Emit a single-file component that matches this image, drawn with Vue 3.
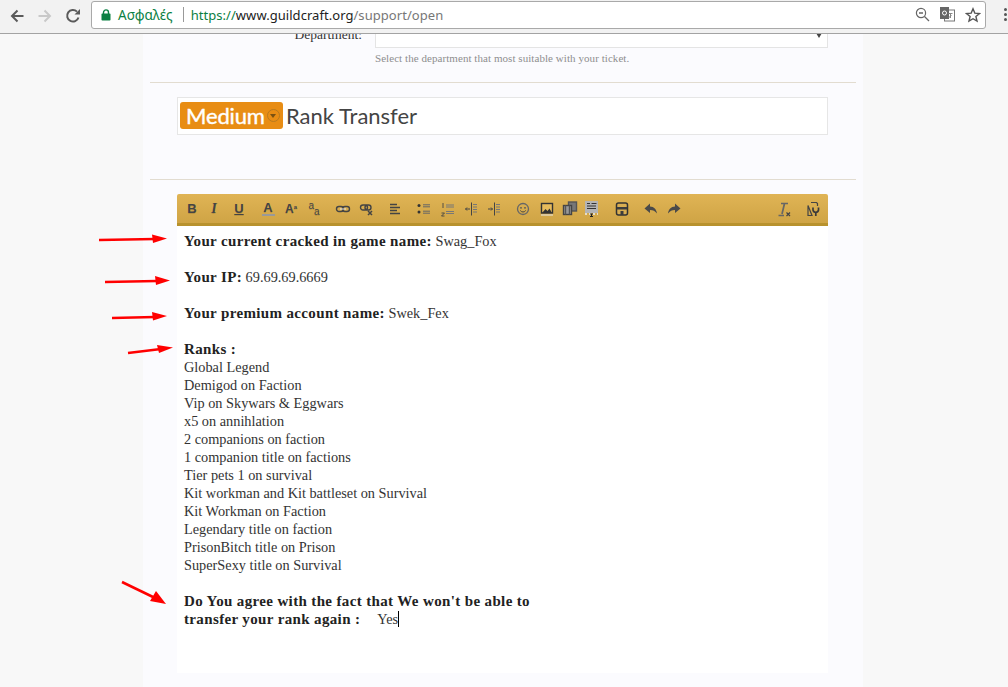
<script setup>
import { computed } from 'vue'

const tools = [
  { id: 'b', x: 192 }, { id: 'i', x: 214 }, { id: 'u', x: 239 }, { id: 'color', x: 268 },
  { id: 'sup', x: 291 }, { id: 'sub', x: 314 }, { id: 'link', x: 343 }, { id: 'unlink', x: 367 },
  { id: 'align', x: 395 }, { id: 'bullets', x: 424 }, { id: 'numbers', x: 448 }, { id: 'outdent', x: 471 },
  { id: 'indent', x: 494 }, { id: 'smile', x: 523 }, { id: 'image', x: 547 }, { id: 'media', x: 570 },
  { id: 'template', x: 592 }, { id: 'save', x: 622 }, { id: 'undo', x: 651 }, { id: 'redo', x: 674 },
  { id: 'clear', x: 784 }, { id: 'source', x: 813 }
]
const placed = computed(() => tools.map((t, i) => ({
  ...t,
  gap: (i === 0 ? t.x - 177 - 8 : t.x - tools[i - 1].x - 16) + 'px'
})))

const ranks = [
  'Global Legend', 'Demigod on Faction', 'Vip on Skywars & Eggwars', 'x5 on annihlation',
  '2 companions on faction', '1 companion title on factions', 'Tier pets 1 on survival',
  'Kit workman and Kit battleset on Survival', 'Kit Workman on Faction',
  'Legendary title on faction', 'PrisonBitch title on Prison', 'SuperSexy title on Survival'
]
</script>

<template>
  <div class="window">
    <header class="chrome">
      <svg class="nav" width="16" height="16" viewBox="0 0 16 16"><path d="M14.500 8H3M8.500 2.500 3 8l5.500 5.500" fill="none" stroke="#5a5a5a" stroke-width="2"/></svg>
      <svg class="nav" width="16" height="16" viewBox="0 0 16 16"><path d="M1.500 8H13M7.500 2.500 13 8l-5.500 5.500" fill="none" stroke="#c9c9c9" stroke-width="2"/></svg>
      <svg class="nav" width="16" height="16" viewBox="0 0 16 16"><path d="M13.500 9.500A5.800 5.800 0 1 1 12 3.600" fill="none" stroke="#5a5a5a" stroke-width="2"/><path d="M9.500 6.500H15V1z" fill="#5a5a5a"/></svg>
      <div class="omnibox">
        <svg width="10" height="12" viewBox="0 0 10 12"><path d="M2.500 5V3.400a2.500 2.500 0 0 1 5 0V5" fill="none" stroke="#0b8043" stroke-width="1.400"/><rect y="4.600" width="9" height="7" x=".5" rx=".8" fill="#0b8043"/></svg>
        <span class="secure">Ασφαλές</span>
        <span class="sep"></span>
        <span class="url"><span class="scheme">https://</span><span class="host">www.guildcraft.org</span><span class="path">/support/open</span></span>
        <span class="omni-icons">
          <svg width="15" height="15" viewBox="0 0 15 15"><circle cx="6" cy="6" r="4.600" fill="none" stroke="#666" stroke-width="1.200"/><path d="M4 6h4M9.500 9.500l4.500 4.500" stroke="#666" stroke-width="1.300" fill="none"/></svg>
          <svg width="15" height="15" viewBox="0 0 15 15"><rect x="4.500" y="3" width="10" height="11" fill="#fff" stroke="#777"/><rect x="0" y="0" width="9" height="12" fill="#666"/><circle cx="4.500" cy="6" r="2" fill="none" stroke="#fff"/><path d="M8.500 6.500h4M10.500 6v5M8.500 11l3-3" stroke="#888" fill="none"/></svg>
          <svg width="16" height="16" viewBox="0 0 16 16"><path d="m8 1.800 1.800 4.300 4.700.4-3.600 3 1.100 4.600L8 11.700l-4 2.400 1.100-4.600-3.600-3 4.700-.4z" fill="none" stroke="#555" stroke-width="1.400"/></svg>
        </span>
      </div>
      <span class="dots"><i></i><i></i><i></i></span>
    </header>

    <main class="page">
      <div class="column">
        <div class="dept-row">
          <label class="dept-label">Department:</label>
          <div class="dept-select"><span class="caret"></span></div>
        </div>
        <p class="help">Select the department that most suitable with your ticket.</p>
        <hr class="rule" />
        <div class="subject">
          <span class="badge">Medium<span class="badge-caret"></span></span>
          <span class="subject-text">Rank Transfer</span>
        </div>
        <hr class="rule second" />

        <section class="editor">
          <div class="toolbar">
            <span v-for="t in placed" :key="t.id" class="tool" :style="{ marginLeft: t.gap }">
              <span v-if="t.id === 'b'" class="g bold">B</span>
              <span v-else-if="t.id === 'i'" class="g ital">I</span>
              <span v-else-if="t.id === 'u'" class="g under">U</span>
              <span v-else-if="t.id === 'color'" class="g colorA">A</span>
              <span v-else-if="t.id === 'sup'" class="g small">A<sup>a</sup></span>
              <span v-else-if="t.id === 'sub'" class="g subs"><span>a</span><sub>a</sub></span>
              <svg v-else width="16" height="16" viewBox="0 0 16 16" fill="none" stroke="#444" stroke-width="1.400">
                <template v-if="t.id === 'link'"><rect x="1.500" y="5.500" width="7" height="5" rx="2.500"/><rect x="7.500" y="5.500" width="7" height="5" rx="2.500"/><path d="M5 8h6" stroke="#eee" stroke-width="1"/></template>
                <template v-else-if="t.id === 'unlink'"><rect x="1.500" y="4" width="7" height="5" rx="2.500"/><rect x="6" y="4" width="6" height="5" rx="2.500"/><path d="m9 10 4 4m0-4-4 4" stroke-width="1.500"/></template>
                <template v-else-if="t.id === 'align'"><path d="M3 3.500h7M3 6.500h10M3 9.500h7M3 12.500h10" stroke-width="1.400"/></template>
                <template v-else-if="t.id === 'bullets'"><circle cx="3" cy="4.500" r="1.500" fill="#333" stroke="none"/><circle cx="3" cy="11" r="1.500" fill="#333" stroke="none"/><path d="M7 3.800h7M7 5.800h7M7 10.200h7M7 12.200h7" stroke-width="1" stroke="#666"/></template>
                <template v-else-if="t.id === 'numbers'"><path d="M3 2v5M1.500 12h3l-3 3h3" stroke-width=".9"/><path d="M6 4h8M6 6h8M6 10.500h8M6 12.500h8" stroke-width="1" stroke="#777"/></template>
                <template v-else-if="t.id === 'outdent'"><path d="M8.500 1.500v13" stroke-width="1"/><path d="M10 3.500h4M10 6h4M10 8.500h4M10 11h4" stroke-width="1" stroke="#777"/><path d="M7 8H2.500M4 6.500 2.500 8 4 9.500" stroke-width="1"/></template>
                <template v-else-if="t.id === 'indent'"><path d="M8.500 1.500v13" stroke-width="1"/><path d="M10 3.500h4M10 6h4M10 8.500h4M10 11h4" stroke-width="1" stroke="#777"/><path d="M2 8h4.500M5 6.500 6.500 8 5 9.500" stroke-width="1"/></template>
                <template v-else-if="t.id === 'smile'"><circle cx="8" cy="8" r="5.500" stroke="#666" stroke-width="1.300"/><circle cx="6" cy="6.800" r=".9" fill="#555" stroke="none"/><circle cx="10" cy="6.800" r=".9" fill="#555" stroke="none"/><path d="M5.300 9.500c1.500 2 3.900 2 5.400 0" stroke-width="1"/></template>
                <template v-else-if="t.id === 'image'"><rect x="2.500" y="2.500" width="11" height="9.500" fill="#e6bb5c" stroke="#333"/><path d="m3 12 3.500-4 2 2 2-2.500 2.500 4.500z" fill="#333" stroke="none"/><path d="M2 14h12" stroke="#e9e9e9" stroke-width="1"/></template>
                <template v-else-if="t.id === 'media'"><rect x="6.500" y="1" width="8" height="9" fill="#777" stroke="#555"/><rect x="1.500" y="4.500" width="8" height="9" fill="#999" stroke="#444"/><path d="M3.500 4.500v9M7.500 4.500v9" stroke="#555"/></template>
                <template v-else-if="t.id === 'template'"><rect x="1" y="0" width="13" height="12" fill="#b4b4b4" stroke="none"/><path d="M3 2.500h3M7.500 2.500h5M3 5h9M3 7.500h9" stroke="#333" stroke-width="1.200"/><path d="M1 13h13" stroke="#eee" stroke-dasharray="2 2"/><path d="M6 13h3M7.500 13v3M6 15.500h3" stroke="#222" stroke-width="1"/></template>
                <template v-else-if="t.id === 'save'"><rect x="2.500" y="2" width="11" height="12" rx="2" fill="#d9ae52" stroke="#333" stroke-width="1.500"/><rect x="3" y="6" width="10" height="2.500" fill="#3c3c3c" stroke="none"/><rect x="6.500" y="10" width="3" height="4" fill="#3c3c3c" stroke="none"/></template>
                <template v-else-if="t.id === 'undo'"><path d="M7 2.500 1.500 7.500 7 12V9c3 0 5 1 7 3.500-.5-4-3-7-7-7z" fill="#4a4a4a" stroke="none"/></template>
                <template v-else-if="t.id === 'redo'"><path d="M9 2.500 14.500 7.500 9 12V9c-3 0-5 1-7 3.500.5-4 3-7 7-7z" fill="#4a4a4a" stroke="none"/></template>
                <template v-else-if="t.id === 'clear'"><path d="M5 2.500h7M8.500 2.500 6 13M2.500 14.500H8" stroke-width="1.700" stroke="#666"/><path d="m10.500 11.500 3.500 3.500m0-3.500-3.500 3.500" stroke-width="1.200"/></template>
                <template v-else-if="t.id === 'source'"><path d="M6 1.500h5.500l1 1V5M7 14.500H3V4.500z" stroke-width="1.200"/><path d="M8 6.500V9a2.800 2.800 0 0 0 5.500 0V6.500M10.800 11.500V15" stroke-width="1.700" stroke="#3a3a3a"/></template>
              </svg>
            </span>
          </div>
          <div class="content">
            <p><strong>Your current cracked in game name:</strong> Swag_Fox</p>
            <p class="blank"></p>
            <p><strong>Your IP:</strong> 69.69.69.6669</p>
            <p class="blank"></p>
            <p><strong>Your premium account name:</strong> Swek_Fex</p>
            <p class="blank"></p>
            <p><strong>Ranks :</strong></p>
            <p v-for="r in ranks" :key="r">{{ r }}</p>
            <p class="blank"></p>
            <p class="agree"><strong>Do You agree with the fact that We won't be able to transfer your rank again :</strong><span class="answer">Yes</span><span class="cursor"></span></p>
          </div>
        </section>
      </div>
    </main>

    <svg class="annotations" width="1008" height="687" viewBox="0 0 1008 687">
      <g stroke="#f00" stroke-width="2.500" fill="#f00">
        <path d="M99 240 155 239" />
        <path d="M105 282 157 281" />
        <path d="M112 318 155 317" />
        <path d="M128 353 161 349" />
        <path d="M122 582 153 597" />
      </g>
      <g fill="#f00">
        <path d="M152 234.500 167 238.500 153 243z" />
        <path d="M155 276 170 280.500 156 285z" />
        <path d="M152 312 167 316 153 320.500z" />
        <path d="M157 345 173 347.500 159 353z" />
        <path d="M156 591 166 604 150 601z" />
      </g>
    </svg>
  </div>
</template>

<style>
html, body { margin: 0; overflow: hidden; }
</style>

<style scoped>
.window { position: relative; width: 1008px; height: 687px; display: flex; flex-direction: column; overflow: hidden; background: #f8f8f8; }
.chrome { height: 33px; box-sizing: content-box; flex: none; display: flex; align-items: center; background: #f2f2f2; border-bottom: 1px solid #a3a3a3; padding-left: 9px; position: relative; z-index: 2; }
.nav { margin-right: 12px; position: relative; top: -1px; flex: none; }
.omnibox { flex: none; margin-left: -2px; width: 895px; height: 28px; box-sizing: border-box; border: 1px solid #a9a9a9; border-radius: 3px; background: #fff; display: flex; align-items: center; padding-left: 9px; position: relative; top: -2px; font: 13px "Noto Sans", sans-serif; }
.secure { color: #0b8043; margin-left: 7px; font-size: 13.500px; }
.sep { width: 1px; height: 15px; background: #999; margin: 0 7px 0 10px; }
.url { color: #777; white-space: nowrap; letter-spacing: .05px; }
.scheme { color: #0b8043; }
.host { color: #222; }
.omni-icons { margin-left: auto; display: flex; align-items: center; gap: 10px; padding-right: 4px; }
.dots { margin-left: 18px; display: flex; flex-direction: column; gap: 2px; position: relative; top: -2px; flex: none; }
.dots i { display: block; width: 3px; height: 3px; border-radius: 50%; background: #555; }

.page { flex: 1; overflow: hidden; min-height: 0; }
.column { width: 720px; margin: -20px 0 0 143px; background: #fbfbfe; padding: 0 35px 0 34px; box-sizing: border-box; height: 720px; font-family: "Liberation Serif", serif; color: #333; }
.dept-row { display: flex; height: 34px; }
.dept-label { width: 185px; text-align: right; font-size: 13.500px; padding-top: 13px; box-sizing: border-box; color: #333; }
.dept-select { margin-left: 13px; flex: 1; background: #fff; border: 1px solid #e4e4e4; box-sizing: border-box; position: relative; }
.caret { position: absolute; right: 5px; top: 18px; width: 0; height: 0; border-left: 3px solid transparent; border-right: 3px solid transparent; border-top: 5px solid #444; }
.help { margin: 4px 0 0 198px; font-size: 11px; line-height: 13px; color: #8e8e8e; letter-spacing: .06px; }
.rule { border: 0; border-top: 1px solid #e2dcd0; margin: 17px -28px 14px -27px; height: 0; }
.subject { height: 38px; background: #fff; border: 1px solid #e6e6e6; box-sizing: border-box; display: flex; align-items: center; padding-left: 2px; font-family: Lato, sans-serif; font-size: 22px; }
.badge { width: 103px; height: 27px; background: #e88d14; border-radius: 3px; color: #fff; display: flex; align-items: center; padding-left: 6px; box-sizing: border-box; position: relative; top: -1px; letter-spacing: -.15px; -webkit-text-stroke: .4px #fff; }
.badge-caret { width: 11px; height: 11px; border: 1px solid #b87a1e; border-radius: 50%; margin-left: 2px; position: relative; flex: none; }
.badge-caret::after { content: ""; position: absolute; left: 2px; top: 4px; border-left: 3.500px solid transparent; border-right: 3.500px solid transparent; border-top: 4px solid #7a5212; }
.subject-text { margin-left: 3px; color: #444; position: relative; top: -1px; }
.rule.second { margin-top: 44px; }

.editor { background: #fff; height: 479px; }
.toolbar { height: 32px; box-sizing: border-box; display: flex; align-items: center; background: linear-gradient(#e0b455, #cfa445); border-bottom: 3px solid #b8922d; border-radius: 2px 2px 0 0; }
.tool { width: 16px; height: 16px; flex: none; display: flex; align-items: center; justify-content: center; }
.g { color: #444; font-family: "Liberation Sans", sans-serif; font-size: 13px; font-weight: 700; line-height: 16px; text-shadow: 0 1px 0 rgba(0,0,0,.12); }
.ital { font-style: italic; font-family: "Liberation Serif", serif; font-size: 14px; }
.under { text-decoration: underline; }
.colorA { border-bottom: 2px solid #999; line-height: 13px; width: 13px; text-align: center; }
.small { font-size: 12px; }
.small sup { font-size: 6px; vertical-align: 4px; line-height: 0; }
.subs { font-size: 10px; font-weight: 400; line-height: 10px; }
.subs span { position: relative; top: -3px; }
.subs sub { font-size: 10px; vertical-align: -3px; line-height: 0; }

.content { padding: 6px 7px; font-size: 14.300px; line-height: 18px; color: #333; }
.content p { margin: 0; white-space: nowrap; }
.content p.blank { height: 18px; }
.content strong { color: #222; font-size: 15px; letter-spacing: .36px; }
.content p.agree { white-space: normal; width: 352px; }
.answer { margin-left: 17px; }
.cursor { display: inline-block; width: 1px; height: 16px; background: #000; vertical-align: -3px; }

.annotations { position: absolute; left: 0; top: 0; pointer-events: none; }
</style>
